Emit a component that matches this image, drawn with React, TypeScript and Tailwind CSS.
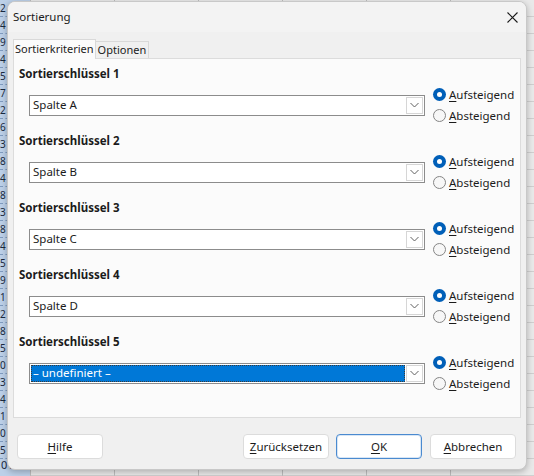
import React from "react";

const font = { fontFamily: '"Noto Sans", "Open Sans", sans-serif' };

function Radio({ checked, label }: { checked: boolean; label: string }) {
  return (
    <div className="flex h-[21px] items-center gap-[3px]">
      {checked ? (
        <span className="flex h-[13px] w-[13px] items-center justify-center rounded-full bg-[#005fb8]">
          <span className="h-[5px] w-[5px] rounded-full bg-white" />
        </span>
      ) : (
        <span className="h-[13px] w-[13px] rounded-full border border-[#858585] bg-[#f7f7f7]" />
      )}
      <span className="text-[11.5px] leading-none text-[#1b1b1b]">
        <span className="underline decoration-1 underline-offset-2">A</span>
        {label.slice(1)}
      </span>
    </div>
  );
}

function Combo({ value, selected }: { value: string; selected?: boolean }) {
  return (
    <div className="flex h-[21px] w-[396px] border border-[#8c8c8c] bg-white">
      <div className="flex flex-1 p-[1px]">
        {selected ? (
          <div className="flex flex-1 items-center border border-dotted border-[#3a3a3a] bg-[#0078d7] pl-[1px] text-[11.5px] text-white">
            {value}
          </div>
        ) : (
          <div className="flex flex-1 items-center pl-[2px] text-[11.5px] text-[#1b1b1b]">{value}</div>
        )}
      </div>
      <div className="my-[1px] mr-[1px] flex w-[17px] items-center justify-center border border-[#d6d6d6] bg-white">
        <svg width="9" height="6" viewBox="0 0 9 6">
          <path d="M0.5 1 L4.5 5 L8.5 1" fill="none" stroke="#606060" strokeWidth="1" />
        </svg>
      </div>
    </div>
  );
}

function Group({ n, value, selected }: { n: number; value: string; selected?: boolean }) {
  return (
    <div className="flex flex-col">
      <div className="h-[16px] pl-[5px] text-[11.5px] font-bold leading-[16px] text-[#1b1b1b]">
        Sortierschlüssel {n}
      </div>
      <div className="mt-[2px] flex h-[42px] items-center">
        <div className="ml-[15px]">
          <Combo value={value} selected={selected} />
        </div>
        <div className="ml-[8px] flex flex-col">
          <Radio checked label="Aufsteigend" />
          <Radio checked={false} label="Absteigend" />
        </div>
      </div>
    </div>
  );
}

function Btn({ children, w, primary }: { children: React.ReactNode; w: number; primary?: boolean }) {
  return (
    <div
      className={
        "flex h-[25px] items-center justify-center rounded-[4px] bg-white text-[11.5px] text-[#1b1b1b] " +
        (primary ? "border border-[#4a8ad0] shadow-[inset_0_0_0_1px_#d8e6f5]" : "border border-[#dcdcdc]")
      }
      style={{ width: w }}
    >
      {children}
    </div>
  );
}

function U({ c, rest }: { c: string; rest: string }) {
  return (
    <span>
      <span className="underline decoration-1 underline-offset-2">{c}</span>
      {rest}
    </span>
  );
}

export default function App() {
  const rows = Array.from({ length: 28 });
  const leftNums = "2494572638483845912850341050".split("");
  return (
    <div className="relative h-[476px] w-[534px] overflow-hidden bg-[#e9e9e9]" style={font}>
      {/* spreadsheet background */}
      <div className="absolute inset-0 flex">
        <div className="flex w-[30px] flex-col bg-[#bcd0e8]">
          {rows.map((_, i) =>
            i === 27 ? (
              <div key={i} className="flex h-[17px] items-start pl-[1px] text-[11px] leading-[12px] text-[#1a2a40]">
                01:05
              </div>
            ) : (
              <div key={i} className="flex h-[17px] border-b border-dashed border-[#7f9bbf]">
                <div className="w-[7px] text-[10px] leading-[16px] text-[#1a2a40]">{leftNums[i]}</div>
              </div>
            )
          )}
        </div>
        {[0, 1, 2, 3, 4, 5].map((c) => (
          <div key={c} className="flex w-[85px] flex-col border-l border-[#bdbdbd]">
            {rows.map((_, i) => (
              <div key={i} className="h-[17px] border-b border-[#cfcfcf]" />
            ))}
          </div>
        ))}
      </div>

      {/* dialog */}
      <div className="absolute left-[7px] top-[1px] flex h-[469px] w-[520px] flex-col overflow-hidden rounded-[8px] border border-[#c8c8c8] bg-[#f0f0f0] shadow-[0_2px_6px_rgba(0,0,0,0.25)]">
        <div className="flex h-[30px] items-center justify-between bg-[#f3f3f3] pl-[5px] pr-[8px]">
          <span className="text-[11.5px] text-[#1b1b1b]">Sortierung</span>
          <svg width="11" height="11" viewBox="0 0 11 11">
            <path d="M0.5 0.5 L10.5 10.5 M10.5 0.5 L0.5 10.5" stroke="#1b1b1b" strokeWidth="1.1" />
          </svg>
        </div>
        <div className="flex flex-1 flex-col px-[5px] pt-[7px]">
          <div className="flex h-[20px] items-end">
            <div className="relative z-10 flex h-[20px] items-center border border-b-0 border-[#d9d9d9] bg-[#fbfbfb] px-[1px] text-[11px] text-[#1b1b1b]">
              Sortierkriterien
            </div>
            <div className="flex h-[18px] items-center border border-b-0 border-l-0 border-[#d9d9d9] bg-[#f0f0f0] px-[2px] text-[11px] text-[#1b1b1b]">
              Optionen
            </div>
          </div>
          <div className="-mt-[1px] flex h-[360px] w-[508px] flex-col gap-[7px] border border-[#dcdcdc] bg-[#fbfbfb] pt-[7px]">
            <Group n={1} value="Spalte A" />
            <Group n={2} value="Spalte B" />
            <Group n={3} value="Spalte C" />
            <Group n={4} value="Spalte D" />
            <Group n={5} value="– undefiniert –" selected />
          </div>
          <div className="mt-[16px] flex items-center pl-[4px] pr-[5px]">
            <Btn w={86}>
              <U c="H" rest="ilfe" />
            </Btn>
            <div className="flex-1" />
            <Btn w={86}>
              <U c="Z" rest="urücksetzen" />
            </Btn>
            <div className="w-[7px]" />
            <Btn w={86} primary>
              <U c="O" rest="K" />
            </Btn>
            <div className="w-[8px]" />
            <Btn w={86}>
              <U c="A" rest="bbrechen" />
            </Btn>
          </div>
        </div>
      </div>
    </div>
  );
}
